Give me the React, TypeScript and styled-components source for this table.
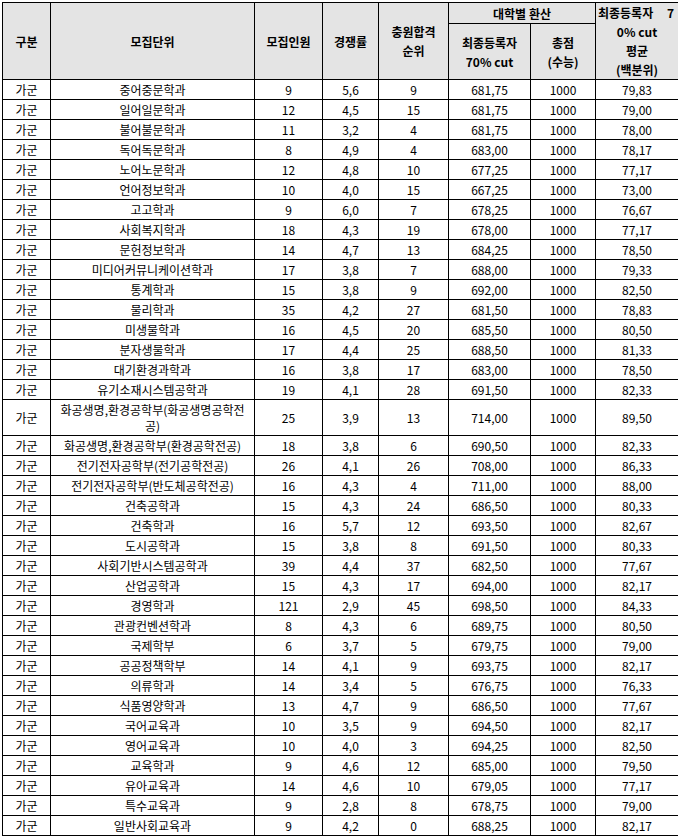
import React from 'react';
import styled, { createGlobalStyle } from 'styled-components';

const GlobalStyle = createGlobalStyle`
	html, body {
		margin: 0;
		padding: 0;
		background: #ffffff;
		overflow: hidden;
	}
`;

const Page = styled.div`
	padding: 2px 0 0 2px;
	width: 678px;
	height: 837px;
	box-sizing: border-box;
	overflow: hidden;
`;

const Table = styled.table`
	border-collapse: collapse;
	table-layout: fixed;
	width: 676px;
	font-family: 'Noto Sans CJK KR', 'Noto Sans', sans-serif;
	color: #000;
`;

const HeadRow = styled.tr<{ $h: number }>`
	height: ${(p) => p.$h}px;
`;

const HeadCell = styled.th`
	background: #e4e4e4;
	border: 1px solid #000;
	font-size: 12px;
	font-weight: 700;
	line-height: 19px;
	padding: 0;
	text-align: center;
	vertical-align: middle;
`;

const WrapHead = styled.div`
	display: flex;
	justify-content: space-between;
	padding: 0 4px 0 2px;
`;

const Row = styled.tr<{ $tall?: boolean }>`
	height: ${(p) => (p.$tall ? '36px' : '20px')};
`;

const Cell = styled.td`
	border: 1px solid #000;
	font-size: 12px;
	font-weight: 400;
	line-height: 16px;
	padding: 0 2px;
	text-align: center;
	vertical-align: middle;
	white-space: nowrap;
`;

type Entry = [string, string, string, string, string, string];

const rows: Entry[] = [
	['중어중문학과', '9', '5,6', '9', '681,75', '79,83'],
	['일어일문학과', '12', '4,5', '15', '681,75', '79,00'],
	['불어불문학과', '11', '3,2', '4', '681,75', '78,00'],
	['독어독문학과', '8', '4,9', '4', '683,00', '78,17'],
	['노어노문학과', '12', '4,8', '10', '677,25', '77,17'],
	['언어정보학과', '10', '4,0', '15', '667,25', '73,00'],
	['고고학과', '9', '6,0', '7', '678,25', '76,67'],
	['사회복지학과', '18', '4,3', '19', '678,00', '77,17'],
	['문헌정보학과', '14', '4,7', '13', '684,25', '78,50'],
	['미디어커뮤니케이션학과', '17', '3,8', '7', '688,00', '79,33'],
	['통계학과', '15', '3,8', '9', '692,00', '82,50'],
	['물리학과', '35', '4,2', '27', '681,50', '78,83'],
	['미생물학과', '16', '4,5', '20', '685,50', '80,50'],
	['분자생물학과', '17', '4,4', '25', '688,50', '81,33'],
	['대기환경과학과', '16', '3,8', '17', '683,00', '78,50'],
	['유기소재시스템공학과', '19', '4,1', '28', '691,50', '82,33'],
	['화공생명,환경공학부(화공생명공학전|공)', '25', '3,9', '13', '714,00', '89,50'],
	['화공생명,환경공학부(환경공학전공)', '18', '3,8', '6', '690,50', '82,33'],
	['전기전자공학부(전기공학전공)', '26', '4,1', '26', '708,00', '86,33'],
	['전기전자공학부(반도체공학전공)', '16', '4,3', '4', '711,00', '88,00'],
	['건축공학과', '15', '4,3', '24', '686,50', '80,33'],
	['건축학과', '16', '5,7', '12', '693,50', '82,67'],
	['도시공학과', '15', '3,8', '8', '691,50', '80,33'],
	['사회기반시스템공학과', '39', '4,4', '37', '682,50', '77,67'],
	['산업공학과', '15', '4,3', '17', '694,00', '82,17'],
	['경영학과', '121', '2,9', '45', '698,50', '84,33'],
	['관광컨벤션학과', '8', '4,3', '6', '689,75', '80,50'],
	['국제학부', '6', '3,7', '5', '679,75', '79,00'],
	['공공정책학부', '14', '4,1', '9', '693,75', '82,17'],
	['의류학과', '14', '3,4', '5', '676,75', '76,33'],
	['식품영양학과', '13', '4,7', '9', '686,50', '77,67'],
	['국어교육과', '10', '3,5', '9', '694,50', '82,17'],
	['영어교육과', '10', '4,0', '3', '694,25', '82,50'],
	['교육학과', '9', '4,6', '12', '685,00', '79,50'],
	['유아교육과', '14', '4,6', '10', '679,05', '77,17'],
	['특수교육과', '9', '2,8', '8', '678,75', '79,00'],
	['일반사회교육과', '9', '4,2', '0', '688,25', '82,17'],
];

const widths = [48, 204, 68, 56, 70, 82, 65, 83];

const App: React.FunctionComponent = () => {
	return (
		<Page>
			<GlobalStyle />
			<Table>
				<colgroup>
					{widths.map((w, i) => (
						<col key={i} style={{ width: w }} />
					))}
				</colgroup>
				<thead>
					<HeadRow $h={21}>
						<HeadCell rowSpan={2}>구분</HeadCell>
						<HeadCell rowSpan={2}>모집단위</HeadCell>
						<HeadCell rowSpan={2}>모집인원</HeadCell>
						<HeadCell rowSpan={2}>경쟁률</HeadCell>
						<HeadCell rowSpan={2}>
							충원합격
							<br />
							순위
						</HeadCell>
						<HeadCell colSpan={2}>대학별 환산</HeadCell>
						<HeadCell rowSpan={2}>
							<WrapHead>
								<span>최종등록자</span>
								<span>7</span>
							</WrapHead>
							0% cut
							<br />
							평균
							<br />
							(백분위)
						</HeadCell>
					</HeadRow>
					<HeadRow $h={55}>
						<HeadCell>
							최종등록자
							<br />
							70% cut
						</HeadCell>
						<HeadCell>
							총점
							<br />
							(수능)
						</HeadCell>
					</HeadRow>
				</thead>
				<tbody>
					{rows.map(([name, count, ratio, rank, cut, avg], i) => {
						const lines = name.split('|');
						return (
							<Row key={i} $tall={lines.length > 1}>
								<Cell>가군</Cell>
								<Cell>
									{lines.map((l, j) => (
										<React.Fragment key={j}>
											{j > 0 && <br />}
											{l}
										</React.Fragment>
									))}
								</Cell>
								<Cell>{count}</Cell>
								<Cell>{ratio}</Cell>
								<Cell>{rank}</Cell>
								<Cell>{cut}</Cell>
								<Cell>1000</Cell>
								<Cell>{avg}</Cell>
							</Row>
						);
					})}
				</tbody>
			</Table>
		</Page>
	);
};

export default App;
